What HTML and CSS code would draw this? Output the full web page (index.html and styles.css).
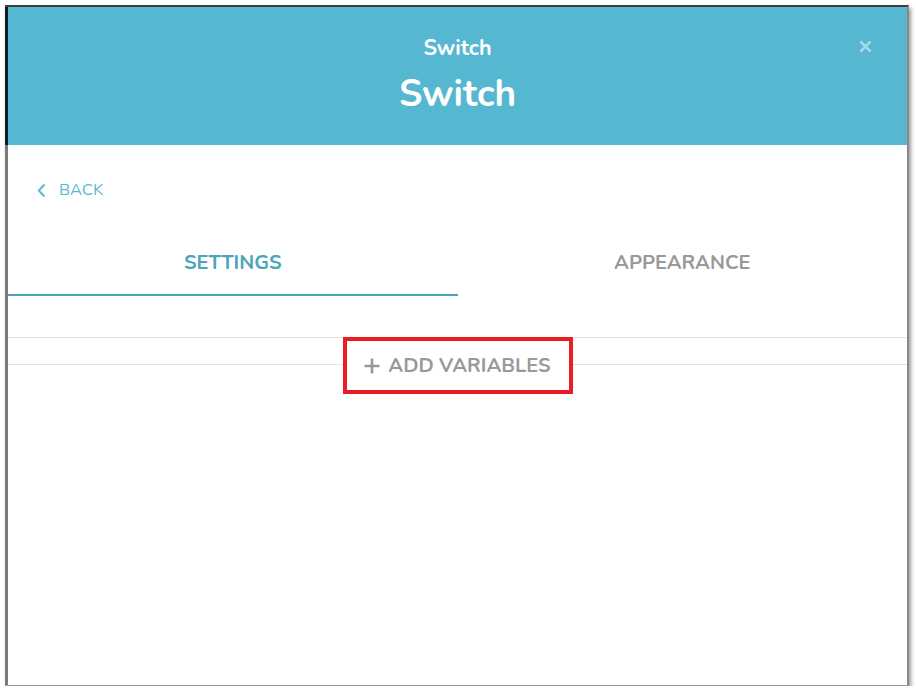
FILE: index.html
```html
<!DOCTYPE html>
<html>
<head>
<meta charset="utf-8">
<link rel="stylesheet" href="styles.css">
</head>
<body>
<div class="window">
  <header class="header">
    <div class="subtitle">Switch</div>
    <div class="title">Switch</div>
    <button class="close" aria-label="close">
      <svg width="13" height="13" viewBox="0 0 13 13"><path d="M1.5 1.5 L11.5 11.5 M11.5 1.5 L1.5 11.5" stroke="currentColor" stroke-width="2.6" stroke-linecap="butt"/></svg>
    </button>
  </header>
  <main class="content">
    <a class="back">
      <svg class="chev" width="9" height="15" viewBox="0 0 9 15"><path d="M7.5 1.5 L1.8 7.5 L7.5 13.5" fill="none" stroke="currentColor" stroke-width="2"/></svg>
      <span>BACK</span>
    </a>
    <nav class="tabs">
      <div class="tab active">SETTINGS</div>
      <div class="tab">APPEARANCE</div>
    </nav>
    <div class="vars">
      <div class="rule"></div>
      <button class="add">
        <svg class="plus" width="16" height="16" viewBox="0 0 16 16"><path d="M8 0.5 V15.5 M0.5 8 H15.5" stroke="currentColor" stroke-width="2.6"/></svg>
        <span>ADD VARIABLES</span>
      </button>
      <div class="rule"></div>
    </div>
  </main>
</div>
</body>
</html>
```
FILE: styles.css
```css
html, body {
  margin: 0;
  padding: 0;
  background: #ffffff;
}
body {
  padding: 5px 0 0 5px;
  font-family: "Nunito", "Lato", "Open Sans", sans-serif;
}
.window {
  width: 902px;
  height: 678px;
  border-top: 2px solid #3f3f3f;
  border-right: 2px solid #8a8a8a;
  border-bottom: 1px solid #9a9a9a;
  display: flex;
  flex-direction: column;
  box-shadow: 2px 3px 4px rgba(0,0,0,0.4);
  background: #fff;
}
.header {
  position: relative;
  height: 138px;
  flex-shrink: 0;
  background: #55b7d0;
  border-left: 3px solid #0d1a28;
  color: #fff;
  display: flex;
  flex-direction: column;
  align-items: center;
  padding-top: 26px;
  box-sizing: border-box;
}
.subtitle {
  font-size: 21.5px;
  font-weight: 700;
  line-height: 30px;
}
.title {
  font-size: 37px;
  font-weight: 700;
  line-height: 44px;
  margin-top: 9px;
}
.close {
  position: absolute;
  right: 35px;
  top: 33px;
  background: none;
  border: 0;
  padding: 0;
  color: #a6d9e7;
  display: flex;
}
.content {
  flex: 1;
  border-left: 3px solid #7a7a7a;
  display: flex;
  flex-direction: column;
}
.back {
  display: flex;
  align-items: center;
  gap: 13px;
  color: #5bb9d2;
  font-size: 16.5px;
  padding: 34px 0 0 29px;
  height: 22px;
  line-height: 22px;
}
.chev {
  display: block;
  flex-shrink: 0;
}
.tabs {
  display: flex;
  margin-top: 48px;
}
.tab {
  flex: 1;
  text-align: center;
  font-size: 20px;
  font-weight: 700;
  color: #999999;
  height: 42px;
  line-height: 24px;
  padding-top: 2px;
  padding-bottom: 1px;
}
.tab.active {
  color: #4aa4ba;
  border-bottom: 2px solid #4aa4ba;
}
.vars {
  display: flex;
  margin-top: 41px;
}
.rule {
  flex: 1;
  height: 26px;
  border-top: 1px solid #e3e3e3;
  border-bottom: 1px solid #e3e3e3;
}
.add {
  width: 230px;
  height: 57px;
  border: 4px solid #ec1c24;
  background: #fff;
  color: #999999;
  font-family: inherit;
  font-size: 20px;
  font-weight: 700;
  padding: 0;
  display: flex;
  align-items: center;
  justify-content: center;
  gap: 8px;
}
.plus {
  display: block;
}
```
